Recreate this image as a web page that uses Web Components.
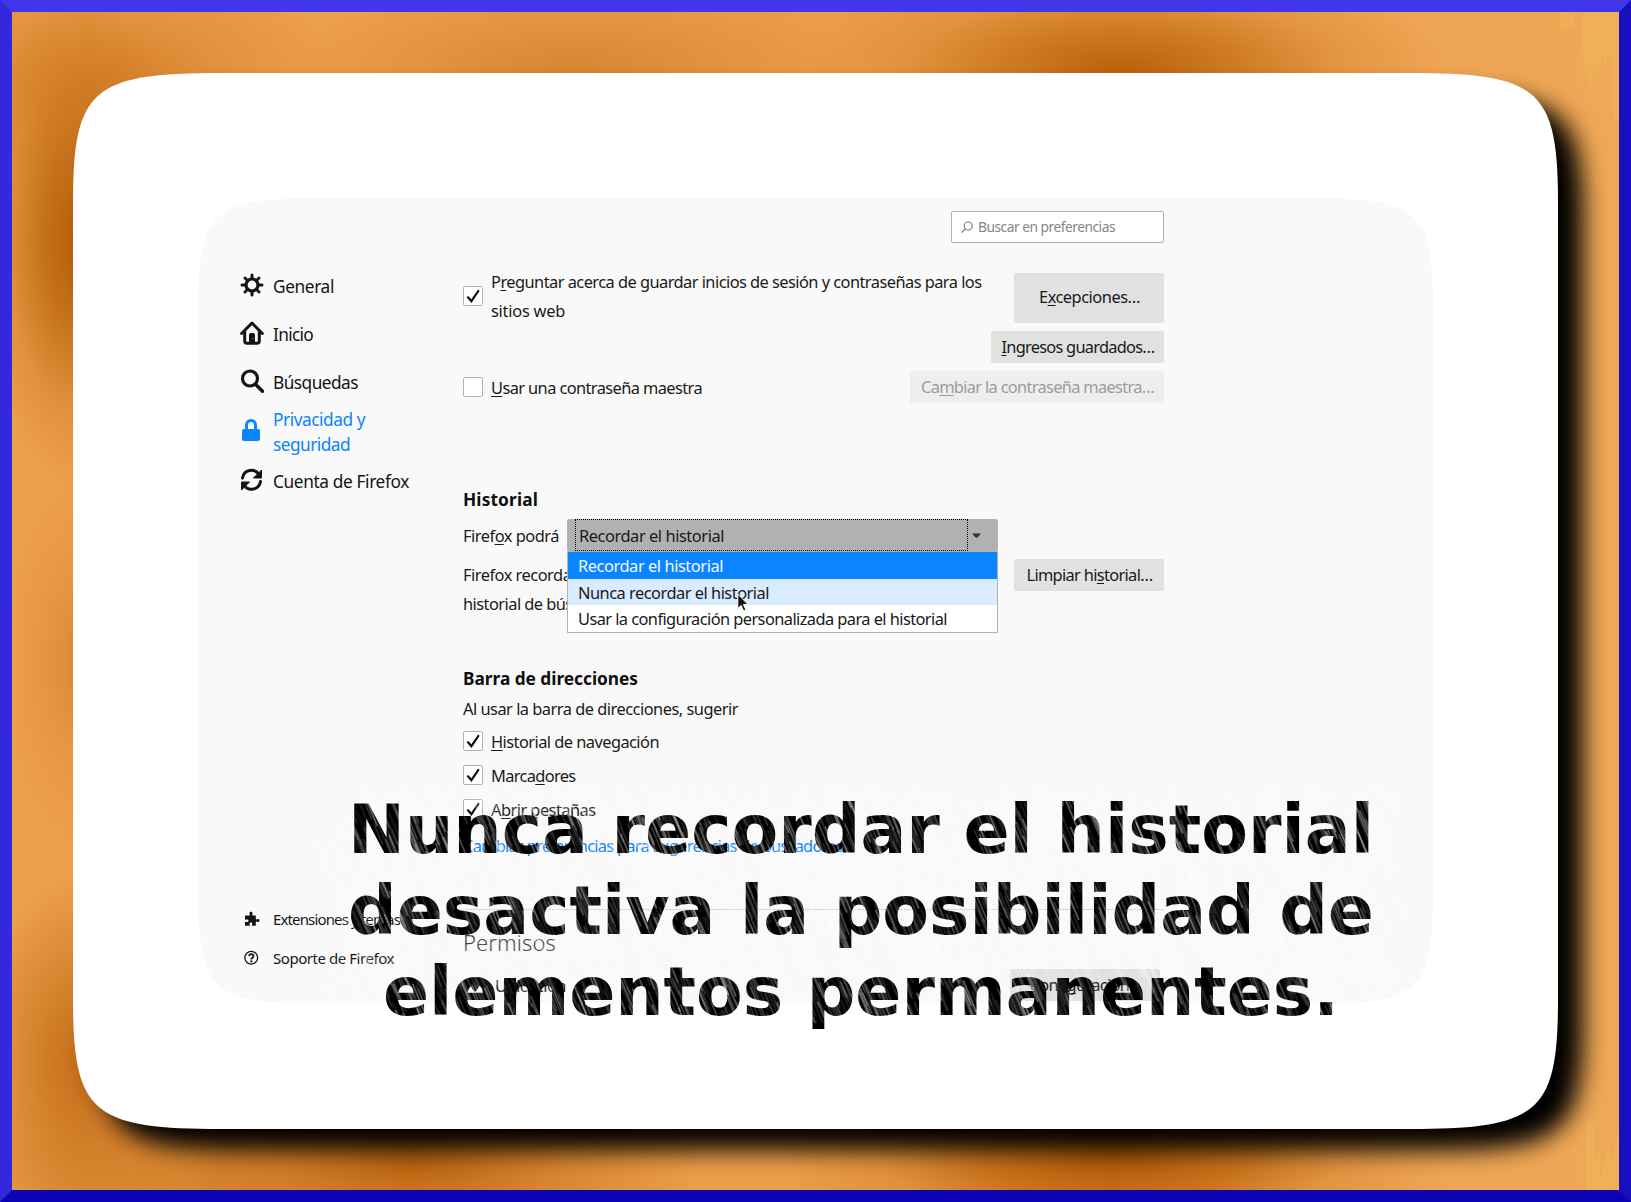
<!DOCTYPE html>
<html lang="es">
<head>
<meta charset="utf-8">
<title>Preferencias – Privacidad y seguridad</title>
<style>
html,body{margin:0;padding:0}
body{width:1631px;height:1202px;overflow:hidden;font:16.4px/29px "Noto Sans","Open Sans",sans-serif;color:#19191a}
u{text-decoration:underline;text-decoration-thickness:1px;text-underline-offset:2px;text-decoration-skip-ink:none}
b{font-size:17.3px;font-weight:700}
</style>
</head>
<body>
<photo-frame>
  <prefs-panel>
    <prefs-nav slot="nav">
      <nav-item icon="gear"><fit-text w="61">General</fit-text></nav-item>
      <nav-item icon="home"><fit-text w="40">Inicio</fit-text></nav-item>
      <nav-item icon="search"><fit-text w="85">Búsquedas</fit-text></nav-item>
      <nav-item icon="lock" active><fit-text w="92">Privacidad y</fit-text><fit-text w="77">seguridad</fit-text></nav-item>
      <nav-item icon="sync"><fit-text w="136">Cuenta de Firefox</fit-text></nav-item>
      <nav-item icon="puzzle" small style="margin-top:395px"><fit-text w="127">Extensiones y temas</fit-text></nav-item>
      <nav-item icon="help" small><fit-text w="121">Soporte de Firefox</fit-text></nav-item>
    </prefs-nav>
    <search-field><fit-text w="137">Buscar en preferencias</fit-text></search-field>
    <pref-row style="margin-top:24px;height:58px">
      <check-box checked><fit-text w="490.500">P<u>r</u>eguntar acerca de guardar inicios de sesión y contraseñas para los</fit-text><fit-text w="74">sitios web</fit-text></check-box>
      <push-button slot="end" style="width:150px;height:50px;margin-top:6px;line-height:47px"><fit-text w="101">E<u>x</u>cepciones…</fit-text></push-button>
    </pref-row>
    <pref-row style="margin-top:6px;height:32px">
      <push-button slot="end" style="width:173px"><fit-text w="153"><u>I</u>ngresos guardados…</fit-text></push-button>
    </pref-row>
    <pref-row style="margin-top:8px;height:32px;align-items:center">
      <check-box><fit-text w="211"><u>U</u>sar una contraseña maestra</fit-text></check-box>
      <push-button slot="end" disabled style="width:254px"><fit-text w="233">Ca<u>m</u>biar la contraseña maestra…</fit-text></push-button>
    </pref-row>
    <section-title style="margin-top:85px"><b><fit-text w="75">Historial</fit-text></b></section-title>
    <pref-row style="margin-top:7px;height:32px;align-items:center">
      <fit-text w="96">Firef<u>o</u>x podrá</fit-text>
      <drop-select style="margin-left:8px">
        <fit-text slot="value" w="145">Recordar el historial</fit-text>
        <fit-text slot="a" w="145">Recordar el historial</fit-text>
        <fit-text slot="b" w="191">Nunca recordar el historial</fit-text>
        <fit-text slot="c" w="369">Usar la configuración personalizada para el historial</fit-text>
      </drop-select>
    </pref-row>
    <pref-row style="margin-top:8px;height:58px">
      <div style="padding-top:1px"><fit-text w="123">Firefox recordará</fit-text><fit-text w="163">historial de búsquedas</fit-text></div>
      <push-button slot="end" style="width:150px"><fit-text w="126">Limpiar hi<u>s</u>torial…</fit-text></push-button>
    </pref-row>
    <section-title style="margin-top:50px"><b><fit-text w="175">Barra de direcciones</fit-text></b></section-title>
    <div style="margin-top:5px;line-height:25px"><fit-text w="275">Al usar la barra de direcciones, sugerir</fit-text></div>
    <check-box checked one style="margin-top:10px"><fit-text w="168"><u>H</u>istorial de navegación</fit-text></check-box>
    <check-box checked one style="margin-top:14px"><fit-text w="84.500">Marca<u>d</u>ores</fit-text></check-box>
    <check-box checked one style="margin-top:14px"><fit-text w="104.500">A<u>b</u>rir pestañas</fit-text></check-box>
    <div style="margin-top:15px;line-height:24px;color:#0a84ff"><fit-text w="380">Cambiar preferencias para sugerencias de buscadores</fit-text></div>
    <div style="margin-top:51px;height:1px;background:#d4d4d5"></div>
    <div style="margin-top:17px;line-height:30px;font-size:22px;font-weight:300;color:#3c3c3e"><fit-text w="93">Permisos</fit-text></div>
    <pref-row style="margin-top:12px;height:32px;align-items:center;padding-right:4px">
      <icon-glyph name="pin" style="margin:0 12px 0 4px"></icon-glyph><fit-text w="71">Ubicación</fit-text>
      <push-button slot="end" style="width:150px"><fit-text w="112">Confi<u>g</u>uración…</fit-text></push-button>
    </pref-row>
  </prefs-panel>
  <caption-text slot="over">
    <fit-text mode="word" w="1026">Nunca recordar el historial</fit-text>
    <fit-text mode="word" w="1026">desactiva la posibilidad de</fit-text>
    <fit-text w="956">elementos permanentes.</fit-text>
  </caption-text>
  <rain-streaks slot="over"></rain-streaks>
  <mouse-pointer slot="over"></mouse-pointer>
</photo-frame>

<script>
const define = (name, html, ready) => customElements.define(name, class extends HTMLElement {
  connectedCallback() {
    if (this.shadowRoot) return;
    const t = document.createElement('template');
    t.innerHTML = typeof html === 'function' ? html(this) : html;
    this.attachShadow({mode: 'open'}).append(t.content.cloneNode(true));
    if (ready) ready(this);
  }
});

// Rounded card outline: flatter than a circular arc, tight at the diagonal.
const card = (l, t, r, b, rx, ry) => {
  const k = .126, x = rx * k, y = ry * k;
  return `M${l} ${t+ry}C${l} ${t+y} ${l+x} ${t} ${l+rx} ${t}H${r-rx}C${r-x} ${t} ${r} ${t+y} ${r} ${t+ry}V${b-ry}C${r} ${b-y} ${r-x} ${b} ${r-rx} ${b}H${l+rx}C${l+x} ${b} ${l} ${b-y} ${l} ${b-ry}Z`;
};

define('photo-frame', `<style>
:host{display:block;box-sizing:border-box;position:relative;width:1631px;height:1202px;padding:186px;border:12px solid;border-color:#3f37e8 #1810bf #0b03b4 #3229dc;
background:
radial-gradient(ellipse 105px 250px at 66px 228px,#b35c07 0,#bd6811cc 35%,#cf7b2466 68%,#d8812c00 100%),
radial-gradient(ellipse 240px 130px at 90px 72px,#cc741fcc 0,#d8812c88 45%,#e4903a00 100%),
radial-gradient(ellipse 80px 190px at 66px 650px,#c9772388 0,#d8812c44 50%,#d8812c00 100%),
radial-gradient(ellipse 120px 190px at 76px 1050px,#c06a17 0,#cd7822bb 45%,#dc893300 100%),
radial-gradient(ellipse 320px 110px at 1110px 58px,#b96209 0,#c9731bcc 38%,#d5822c66 68%,#dd8a3500 100%),
radial-gradient(ellipse 290px 90px at 560px 60px,#d18029cc 0,#d5852f66 55%,#dc893300 100%),
radial-gradient(ellipse 290px 110px at 400px 1150px,#bb650f 0,#cc7620aa 48%,#dc893300 100%),
radial-gradient(ellipse 330px 110px at 1100px 1145px,#b05a06 0,#c16912cc 40%,#d07d2766 68%,#dc893300 100%),
radial-gradient(ellipse 300px 90px at 210px 1160px,#d07c26bb 0,#dc893300 100%),
linear-gradient(90deg,#eda04c,#eb9c48 60%,#efa857)}
svg{position:absolute;left:-12px;top:-12px;width:1631px;height:1202px;pointer-events:none}
.c{position:relative}
</style>
<svg viewBox="0 0 1631 1202"><defs><filter id="s" x="0" y="0" width="1631" height="1202" filterUnits="userSpaceOnUse"><feGaussianBlur stdDeviation="12.5"/></filter>
<clipPath id="k"><path d="M12 12H1619V1190H12Z"/></clipPath></defs>
<g fill="#f0b65a" opacity=".55"><path d="M1560 12v14l3 6v-8l4 9 3-7 4 2v-16zM1583 12v40l3 30 2-12 3 18 4-22 3 10 4-25 3 16 3-12 4 8v42l3 14h4V12zM1586 1190v-72l8 6v40l6-16v30l8-34 4 14 7-28v60z"/></g>
<g clip-path="url(#k)"><path filter="url(#s)" transform="translate(25 21)" fill="#050300" d="${card(73,73,1558,1129,148,130)}"/></g>
<path fill="#fff" d="${card(73,73,1558,1129,148,130)}"/><path fill="#f9f9f9" d="${card(198.5,198,1433,1004,122,106)}"/></svg>
<div class="c"><slot></slot></div><slot name="over"></slot>`);

define('prefs-panel', `<style>
:host{display:flex;width:1235px;height:806px}
main{display:flex;flex-direction:column;width:701px;padding-top:13px}
</style><slot name="nav"></slot><main><slot></slot></main>`);

define('prefs-nav', `<style>:host{display:flex;flex-direction:column;flex:none;width:223px;margin:63px 0 0 42px}</style><slot></slot>`);

// Text set to a given advance width through letter or word spacing.
define('fit-text', `<style>:host{display:block;white-space:nowrap}span{display:inline-block}</style><span><slot></slot></span>`, el => {
  const s = el.shadowRoot.querySelector('span');
  el.fit = () => {
    s.style.letterSpacing = s.style.wordSpacing = '0';
    const have = s.getBoundingClientRect().width, txt = el.textContent, d = +el.getAttribute('w') - have;
    if (!have) return;
    if (el.getAttribute('mode') === 'word') s.style.wordSpacing = d / (txt.split(' ').length - 1) + 'px';
    else s.style.letterSpacing = d / txt.length + 'px';
  };
});

const glyphs = {
  gear: [24, `<g fill="none" stroke="currentColor" stroke-linecap="round"><circle cx="12" cy="12" r="6" stroke-width="3.2"/><path stroke-width="3" d="M12 2v3M12 19v3M2 12h3M19 12h3M5 5l2 2M17 17l2 2M19 5l-2 2M5 19l2-2"/></g>`],
  home: [24, `<path fill="none" stroke="currentColor" stroke-width="3" stroke-linejoin="round" stroke-linecap="round" d="M1.6 12.5 12 2l10.400 10.500M4.700 10.500V20q0 2.300 2.300 2.300h10q2.300 0 2.300-2.300V10.500"/><path fill="currentColor" d="M9 22v-8q0-2 2-2h2q2 0 2 2v8z"/><circle cx="13" cy="17.300" r=".8" fill="#777"/>`],
  search: [24, `<g fill="none" stroke="currentColor" stroke-linecap="round"><circle cx="10" cy="9.500" r="7.500" stroke-width="3.200"/><path stroke-width="3.400" d="m15.500 15.200 7 7"/></g>`],
  lock: [24, `<rect x="2" y="11" width="18" height="12" rx="2" fill="currentColor"/><path fill="none" stroke="currentColor" stroke-width="3" d="M6.500 12V7a4.500 4.500 0 0 1 9 0v5"/>`],
  sync: [24, `<g fill="none" stroke="currentColor" stroke-width="3" stroke-linecap="round"><path d="M2.500 10A9 9 0 0 1 19 6.500M20.500 13.500A9 9 0 0 1 4 17"/></g><path fill="currentColor" stroke="currentColor" stroke-linejoin="round" d="M21.500 2v8h-8zM1.500 22v-8h8z"/>`],
  puzzle: [16, `<path fill="currentColor" d="M1 4.500h4.200c.7 0 .8-.6.500-1.100C5.100 2 5.700.8 7 .8s2 1.200 1.300 2.600c-.3.500-.1 1.100.6 1.100h2.900v3.200c0 .7.600.9 1.100.5 1.200-.7 2.600-.2 2.600 1.200s-1.400 2-2.600 1.300c-.5-.3-1.100-.1-1.100.6v3.500H8.500c-.6 0-.8-.5-.5-1 .6-1.200 0-2.200-1.100-2.200s-1.700 1-1.100 2.200c.3.500.1 1-.5 1H1v-3.600c0-.6.500-.7 1-.4 1.400.6 2.500.2 2.500-1S3.300 8.100 2 8.700c-.5.300-1 0-1-.6z"/>`],
  help: [16, `<circle cx="7.200" cy="7.700" r="6.400" fill="none" stroke="currentColor" stroke-width="1.300"/><path fill="none" stroke="currentColor" stroke-width="1.900" d="M5.100 6.200Q5.300 4.100 7.300 4.100t2.100 1.900q0 1.200-1.100 1.800T7.300 9.500"/><circle cx="7.300" cy="11.400" r="1.100" fill="currentColor"/>`],
  pin: [16, `<path fill="currentColor" fill-rule="evenodd" d="M8 1a5 5 0 0 0-5 5c0 4 5 9 5 9s5-5 5-9a5 5 0 0 0-5-5zm0 3a2 2 0 1 1 0 4 2 2 0 0 1 0-4z"/>`]
};
define('icon-glyph', el => {
  const [n, p] = glyphs[el.getAttribute('name')];
  return `<style>:host{display:block;flex:none}svg{display:block}</style><svg width="${n}" height="${n}" viewBox="0 0 ${n} ${n}">${p}</svg>`;
});

define('nav-item', el => `<style>
:host{display:flex;align-items:center;height:48px;font-size:17.3px;line-height:25px;color:#141415}
div{padding-top:2px}
:host([active]){color:#0a84ff;height:50px;margin-bottom:1px}
:host([active]) div{padding-top:4px}
:host([small]){height:39px;font-size:15px}
:host([small]) div{padding-top:1px}
.i{width:24px;display:flex;justify-content:flex-start;margin-right:9px}
:host([small]) .i{padding-left:4px;width:20px}
</style><span class="i"><icon-glyph name="${el.getAttribute('icon')}"></icon-glyph></span><div><slot></slot></div>`);

define('search-field', `<style>
:host{display:flex;align-items:center;align-self:flex-end;box-sizing:border-box;width:213px;height:32px;border:1px solid #b1b1b1;border-radius:2px;background:#fff;padding-left:9px;font-size:13.8px;line-height:28px;color:#858586}
svg{margin-right:5px}
</style><svg width="12" height="13" viewBox="0 0 12 13" fill="none" stroke="#777" stroke-width="1.100"><circle cx="7.200" cy="5" r="4"/><path d="M4.200 7.800.5 11.700"/></svg><slot></slot>`);

define('pref-row', `<style>:host{display:flex;align-items:flex-start}.g{flex:1}</style><slot></slot><span class="g"></span><slot name="end"></slot>`);

define('section-title', `<style>:host{display:block;line-height:24px;color:#0f0f10}</style><slot></slot>`);

define('push-button', `<style>
:host{display:flex;justify-content:center;box-sizing:border-box;height:32px;line-height:32px;border-radius:2px;background:#e1e1e1}
:host([disabled]){background:#eee;color:#9c9c9d}
::slotted(*){margin-left:1px}
</style><slot></slot>`);

define('check-box', el => `<style>
:host{display:flex;align-items:center}
:host([one]){height:20px}
.b{box-sizing:border-box;width:20px;height:20px;border:1px solid #b1b1b1;border-radius:2px;background:#fff;margin-right:8px;flex:none}
svg{display:block}
</style><span class="b">${el.hasAttribute('checked') ? '<svg width="18" height="18" viewBox="0 0 18 18"><path fill="none" stroke="#0c0c0d" stroke-width="2.200" stroke-linecap="round" d="m4 10.300 3.400 3.900L14.300 4"/></svg>' : ''}</span><div><slot></slot></div>`);

define('drop-select', `<style>
:host{display:block;position:relative;width:431px;height:32px;z-index:2;line-height:31px}
.v{display:flex;height:32px;background:#b1b1b1;border-radius:2px;box-sizing:border-box;padding-left:8px}
.f{box-sizing:border-box;width:393px;height:32px;border:1px dotted #000;padding-left:3px}
.v svg{margin:14px 0 0 4px}
.m{position:absolute;left:0;top:32px;box-sizing:border-box;width:431px;height:82px;border:1px solid #b1b1b1;background:#fff;line-height:27px}
.m div{height:26px;padding-left:10px}
.m .s{height:27px;background:#0a84ff;color:#f2f8ff}
.m .h{background:#d9ebff}
</style><div class="v"><div class="f"><slot name="value"></slot></div><svg width="9" height="6" viewBox="0 0 9 6"><path fill="#2e3436" d="M0 .5h9L5.500 4.500h-2z"/></svg></div>
<div class="m"><div class="s"><slot name="a"></slot></div><div class="h"><slot name="b"></slot></div><div><slot name="c"></slot></div></div>`);

define('caption-text', `<style>
:host{position:absolute;left:335px;top:777px;width:1028px;z-index:3;font:bold 68px/81px "DejaVu Sans",sans-serif;color:#000;text-align:center}
</style><slot></slot>`);

define('mouse-pointer', `<style>:host{position:absolute;left:725px;top:581px;z-index:4}svg{display:block}</style>
<svg width="13" height="20" viewBox="0 0 13 20"><path fill="#111" stroke="#fff" stroke-width="1" d="M.8 1v14.500l3.300-3 2.600 5.500 2.200-1-2.500-5.400h4.700z"/></svg>`);

// Slanted light streaks, laid out by a fixed-seed generator.
define('rain-streaks', () => {
  let seed = 4217;
  const r = () => (seed = (seed * 16807) % 2147483647) / 2147483647;
  const groups = [];
  for (let g = 0; g < 8; g++) {
    let d = '';
    for (let i = 0; i < (g < 5 ? 520 : 300); i++) {
      const x = r() * 1150 - 20, y = r() * 245 - 18, n = 14 + r() * 34;
      d += `M${x.toFixed(1)} ${y.toFixed(1)}l${(n * .42).toFixed(1)} ${n.toFixed(1)}`;
    }
    groups.push(`<path d="${d}" stroke-width="${[3,2.6,2.2,1.8,1.6,1.5,1.6,1.8][g]}" opacity="${[.06,.08,.1,.13,.17,.22,.28,.34][g]}"/>`);
  }
  return `<style>:host{position:absolute;left:278px;top:776px;width:1130px;height:235px;z-index:3;pointer-events:none;overflow:hidden;-webkit-mask-image:linear-gradient(90deg,transparent,#000 8%,#000 96%,transparent);mask-image:linear-gradient(90deg,transparent,#000 8%,#000 96%,transparent)}svg{display:block;filter:blur(.5px)}</style>
<svg width="1130" height="235" fill="none" stroke="#fff" stroke-linecap="round">${groups.join('')}</svg>`;
});

document.querySelectorAll('fit-text').forEach(e => e.fit());
</script>
</body>
</html>
